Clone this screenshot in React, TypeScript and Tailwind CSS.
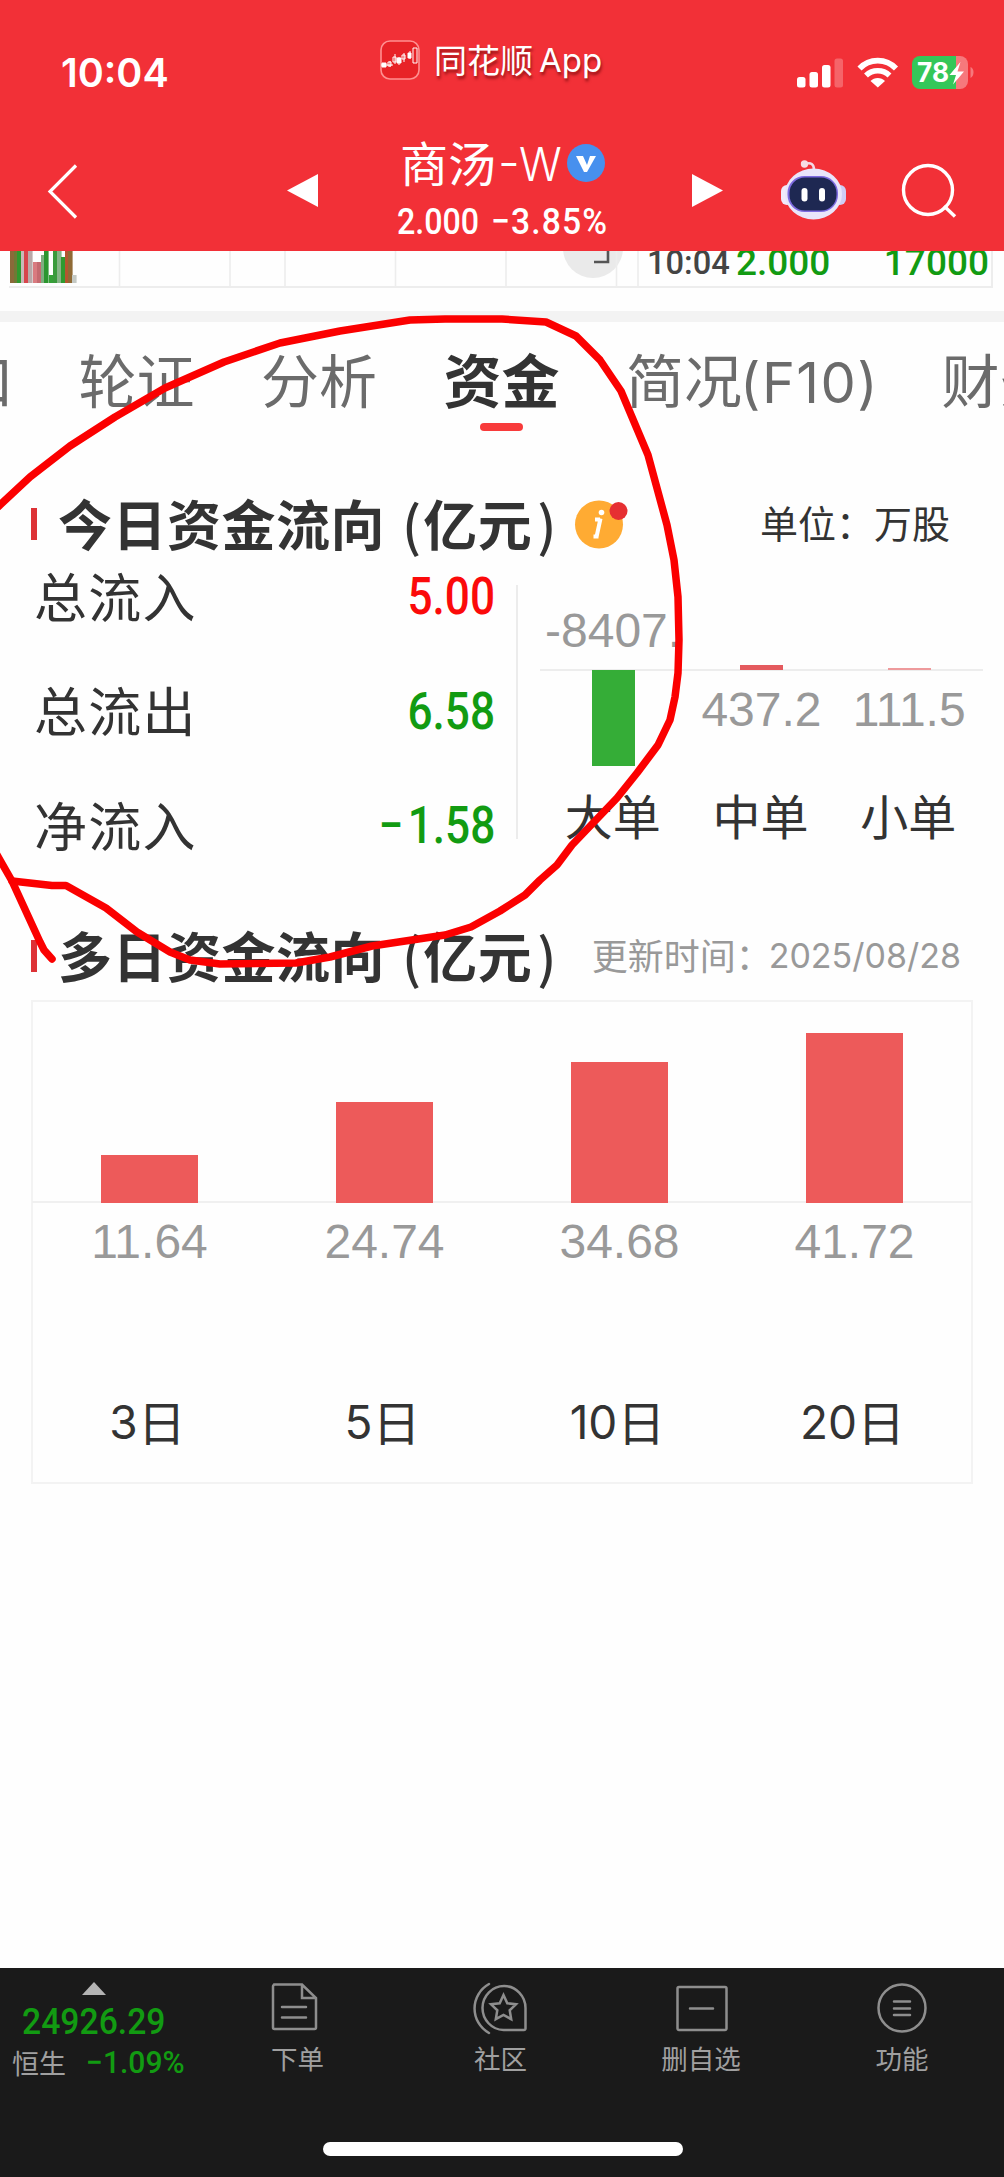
import type { ReactNode } from "react"
import clsx from "clsx"

const cjk = "font-['Noto_Sans_CJK_SC',sans-serif]"
const din = "font-['Roboto','Noto_Sans_CJK_SC',sans-serif]"
const arial = "font-['Liberation_Sans',sans-serif]"
const inter = "font-['Inter','Noto_Sans_CJK_SC',sans-serif]"

const tabs = ["盘口", "轮证", "分析", "资金", "简况(F10)", "财务"]

const flows = [
  { label: "总流入", sign: "", value: "5.00", up: true },
  { label: "总流出", sign: "", value: "6.58", up: false },
  { label: "净流入", sign: "−", value: "1.58", up: false },
]

const days = [
  { count: "3", value: "11.64", height: 48 },
  { count: "5", value: "24.74", height: 101 },
  { count: "10", value: "34.68", height: 141 },
  { count: "20", value: "41.72", height: 170 },
]

// x offset, color, top offset
const volumeBars = [
  [0, "#8a6a3a", 0], [4, "#6f7a35", 0], [7, "#2f9a2f", 0], [11, "#c9b9b9", 0], [14, "#d8454c", 0], [18, "#b9a9a9", 0],
  [23, "#d97b80", 11], [27, "#c56a70", 11], [31, "#7fae7f", 4], [34, "#2c962f", 0], [39, "#35a137", 24],
  [43, "#3a9a3c", 0], [47, "#86b586", 0], [51, "#2f9a2f", 6], [55, "#b4562f", 0], [58, "#8f6a35", 0], [62, "#c4c9c4", 24],
] as const

function StatusIcons() {
  return (
    <svg className="h-[36px] w-[180px]" viewBox="796 54 180 36" fill="#fff">
      <rect x="797" y="77" width="8.5" height="10.5" rx="2.5" />
      <rect x="809.5" y="72" width="8.5" height="15.5" rx="2.5" />
      <rect x="822" y="65" width="8.5" height="22.5" rx="2.5" />
      <rect x="834.5" y="58.5" width="8.5" height="29" rx="2.5" opacity=".25" />
      <g fill="none" stroke="#fff" strokeWidth="5.6">
        <path d="M859.5 68.5a25 25 0 0 1 36.500 0" />
        <path d="M866 75.500a17 17 0 0 1 23.500 0" />
      </g>
      <path d="M870.500 81a10 10 0 0 1 14.500 0l-7.200 6.500z" />
      <path d="M920 56h32v33h-32a8 8 0 0 1-8-8V64a8 8 0 0 1 8-8z" fill="#34c759" />
      <path d="M955 56h5a8 8 0 0 1 8 8v17a8 8 0 0 1-8 8h-5z" opacity=".35" />
      <rect x="950" y="56" width="6" height="33" fill="#34c759" />
      <path d="M970.5 67c4 1.500 4 9 0 11z" opacity=".35" />
      <text x="917" y="82" fontFamily="Inter, sans-serif" fontWeight="700" fontSize="26.5" textLength="32" lengthAdjust="spacingAndGlyphs">
        78
      </text>
      <path d="M960.500 62 949.500 75h6.500l-3 9.500L964 71.500h-6.500z" />
    </svg>
  )
}

function Robot() {
  return (
    <svg className="h-[62px] w-[68px]" viewBox="780 159 68 62">
      <path d="M806 164c6-2 9 0 9 6" fill="none" stroke="#f3d9e6" strokeWidth="2.6" />
      <circle cx="805.5" cy="164" r="3.7" fill="#f7dce4" />
      <rect x="782" y="185" width="12" height="20" rx="6" fill="#f1e9fb" />
      <rect x="835" y="185" width="12" height="20" rx="6" fill="#cfcdf5" />
      <ellipse cx="814.5" cy="194" rx="28.5" ry="25.5" fill="#e9e5fa" />
      <rect x="788.5" y="176" width="50.5" height="36" rx="17" fill="#7d6ae0" />
      <rect x="790.5" y="177.5" width="47" height="33" rx="15.5" fill="#1e2852" />
      <rect x="802.5" y="188" width="6" height="13.5" rx="3" fill="#fff" />
      <rect x="820" y="188" width="6" height="13.5" rx="3" fill="#fff" />
    </svg>
  )
}

function Header() {
  return (
    <header className="relative z-10 h-[251px] shrink-0 bg-[#f23037] text-white">
      <div className="flex h-[110px] pr-[28px] pl-[61px]">
        <div className={clsx(inter, "w-[319px] pt-[45px] text-[39.5px] leading-[56px] font-semibold")}>10:04</div>
        <div className="box-content flex h-[40px] w-[416px] items-center pt-[40px]">
          <svg className="size-[40px]" viewBox="0 0 40 40" fill="none" stroke="#fff">
            <rect x="1" y="1" width="38" height="38" rx="9" fill="#e82227" stroke="#ff8f90" strokeWidth="1.6" />
            <path d="M1 25h12M10 27v-6M15 14v10M19 17v8M24 13v9M30 11v8" strokeWidth="1" />
            <path d="M2 23h4v4H2zM17 18h4v5h-4zM28 13h3v5h-3z" fill="#fff" strokeWidth="1" />
            <path d="M8 22h3v4H8zM13 17h3v5h-3zM22 15h3v4h-3zM33 8h4v15h-4z" strokeWidth="1" />
          </svg>
          <span className={clsx(cjk, "-mt-[2px] ml-[14px] text-[33px] leading-none [text-shadow:1px_3px_3px_rgba(90,0,0,0.6)]")}>
            同花顺
          </span>
          <span className={clsx(inter, "ml-[6px] text-[33px] leading-none [text-shadow:1px_3px_3px_rgba(90,0,0,0.6)]")}>App</span>
        </div>
        <div className="pt-[54px]">
          <StatusIcons />
        </div>
      </div>
      <div className="flex">
        <svg className="mt-[51px] ml-[46px] h-[60px] w-[34px]" viewBox="46 161 34 60" fill="none" stroke="#fff" strokeWidth="3.2">
          <path d="M76 165.500 50 191.500l26 26" />
        </svg>
        <svg className="mt-[62px] ml-[207px] h-[36px] w-[32px]" viewBox="0 0 32 36" fill="#fff">
          <path d="M31 2v33L0 18.500z" />
        </svg>
        <div className="ml-[78px] w-[215px]">
          <div className="mt-[22px] flex h-[60px] items-center pl-[3px]">
            <span className={clsx(cjk, "-mt-[2px] text-[48px] leading-none")}>商汤</span>
            <span className={clsx(inter, "ml-[2px] text-[48px] leading-none font-light")}>-</span>
            <span className={clsx(inter, "mt-[3px] -ml-px origin-left scale-x-[0.94] text-[47px] leading-none font-light")}>W</span>
            <svg className="absolute top-[143px] left-[566px] size-[40px]" viewBox="0 0 40 40">
              <circle cx="20" cy="20" r="19" fill="#4790ee" />
              <path d="M10 13h7l4 9 3-9h6l-9 16h-3z" fill="#fff" />
            </svg>
          </div>
          <div className={clsx(din, "mt-[4px] flex h-[50px] items-center text-[37px] leading-none font-medium whitespace-nowrap")}>
            <span className="w-[95px] origin-left scale-x-[0.87]">2.000</span>
            <span className="origin-left scale-x-[0.91] tracking-[1.2px]">−3.85%</span>
          </div>
        </div>
        <svg className="mt-[62px] ml-[79px] h-[36px] w-[32px]" viewBox="0 0 32 36" fill="#fff">
          <path d="M1 2v33l31-16.500z" />
        </svg>
        <div className="mt-[49px] ml-[56px]">
          <Robot />
        </div>
        <svg className="mt-[50px] ml-[53px] size-[60px]" viewBox="900 160 60 60" fill="none" stroke="#fff" strokeWidth="3.4">
          <circle cx="928" cy="190" r="24.5" />
          <path d="m944 206 11 10.500" />
        </svg>
      </div>
    </header>
  )
}

function QuoteStrip() {
  return (
    <div className="h-[60px] shrink-0">
      <div className="ml-[9px] flex h-[37px] w-[984px] border-r-2 border-b-2 border-[#ededed]">
        <svg className="h-[35px] w-[630px] shrink-0" viewBox="9 251 630 35">
          {volumeBars.map(([x, color, top]) => (
            <rect key={x} x={10 + x} y={251 + top} width="4.6" height={32 - top} fill={color} />
          ))}
          <circle cx="593" cy="248" r="30" fill="#eaeaea" />
          <path d="M119.500 251v36M230 251v36M285 251v36M395.500 251v36M506 251v36M616.500 251v36M638 251v36" stroke="#ededed" strokeWidth="1.6" />
          <path d="M608 251v11h-14" fill="none" stroke="#555" strokeWidth="2.6" />
        </svg>
        <div className={clsx(din, "-mt-px flex grow items-start text-[37px] leading-[26px] font-medium")}>
          <span className="-mt-px ml-[8px] w-[89px] origin-left scale-x-[0.96] text-[34px] whitespace-nowrap text-[#444]">10:04</span>
          <span className="origin-left text-[#129b12]">2.000</span>
          <span className="mr-[2px] ml-auto text-[#129b12]">17000</span>
        </div>
      </div>
    </div>
  )
}

function Tabs() {
  return (
    <nav className={clsx(cjk, "-ml-[102px] flex h-[118px] shrink-0 gap-[66.5px] overflow-hidden text-[58px] leading-none whitespace-nowrap text-[#6b6b6b]")}>
      {tabs.map((tab) => (
        <div
          key={tab}
          className={clsx("flex shrink-0 flex-col items-center pt-[27px]", tab === "资金" && "font-bold text-[#333]", tab === "轮证" && "-ml-[2px]", tab === "财务" && "-ml-[4px]")}
        >
          {tab === "简况(F10)" ? (
            <span>
              简况<span className={clsx(inter, "-ml-[2px] text-[56px] leading-none tracking-[1.4px]")}>(F10)</span>
            </span>
          ) : (
            <span>{tab}</span>
          )}
          {tab === "资金" && <span className="mt-[16px] h-[8px] w-[43px] rounded-full bg-[#f83b3b]" />}
        </div>
      ))}
    </nav>
  )
}

function SectionTitle({ children }: { children: ReactNode }) {
  return (
    <h2 className={clsx(cjk, "flex items-center text-[54px] leading-none font-bold whitespace-nowrap text-[#333]")}>
      <span className="mr-[21px] h-[32px] w-[6px] bg-[#dd3236]" />
      <span className="-mt-[3px] tracking-[0.5px]">{children}</span>
      <span className="-mt-[3px] ml-[17px] font-medium">(</span>
      <span className="-mt-[3px] ml-[2px] tracking-[0.5px]">亿元</span>
      <span className="-mt-[3px] ml-[5px] font-medium">)</span>
    </h2>
  )
}

function TodayFlow() {
  return (
    <section className="shrink-0">
      <div className="flex h-[60px] items-center pl-[31px]">
        <SectionTitle>今日资金流向</SectionTitle>
        <svg className="ml-[17px] size-[56px]" viewBox="573 496 56 56">
          <circle cx="599" cy="524.5" r="24" fill="#ffab33" />
          <path d="M600.500 518.500 596.500 537M595 519.500h5M593.500 536.500h5" stroke="#fff" strokeWidth="4" />
          <circle cx="601.5" cy="512.5" r="2.8" fill="#fff" />
          <circle cx="618.5" cy="511" r="9" fill="#e62f32" />
        </svg>
        <span className={clsx(cjk, "-mt-[4px] mr-[54px] ml-auto text-[38px] leading-none text-[#333]")}>单位：万股</span>
      </div>
      <div className="flex h-[300px] pl-[34px]">
        <div className="w-[461px] pt-[13px]">
          {flows.map((flow) => (
            <div key={flow.label} className="mb-[54.5px] flex h-[60px] items-center justify-between">
              <span className={clsx(cjk, "-mt-[4px] text-[53px] leading-none tracking-[1.2px] text-[#333]")}>{flow.label}</span>
              <span
                className={clsx(
                  din,
                  "origin-right scale-x-[0.85] text-[52px] leading-none font-medium",
                  flow.up ? "text-[#fb0a0a]" : "text-[#129b12]",
                )}
              >
                {flow.sign && <span className="mr-[5px]">{flow.sign}</span>}
                {flow.value}
              </span>
            </div>
          ))}
        </div>
        <div className="mt-[31px] ml-[21px] h-[254px] w-[2px] bg-[#ececec]" />
        <div className="ml-[22px] grid w-[443px] grid-cols-3 self-start">
          <div className="flex flex-col items-center">
            <div className="flex h-[117px] w-full flex-col justify-end border-b-2 border-[#ededed]">
              <span className={clsx(arial, "mb-[16px] pl-[5px] text-[48px] leading-[45px] text-[#999]")}>-8407.</span>
            </div>
            <div className="-mt-px h-[96px] w-[43px] bg-[#35ad37]" />
          </div>
          <div className="flex flex-col items-center">
            <div className="flex h-[117px] w-full flex-col items-center justify-end border-b-2 border-[#ededed]">
              <div className="-mb-px h-[5px] w-[43px] bg-[#e45a5e]" />
            </div>
            <span className={clsx(arial, "mt-[14px] text-[48px] leading-[50px] text-[#999]")}>437.2</span>
          </div>
          <div className="flex flex-col items-center">
            <div className="flex h-[117px] w-full flex-col items-center justify-end border-b-2 border-[#ededed]">
              <div className="-mb-px h-[2px] w-[43px] bg-[#ee9a9c]" />
            </div>
            <span className={clsx(arial, "mt-[14px] text-[48px] leading-[50px] text-[#999]")}>111.5</span>
          </div>
          {["大单", "中单", "小单"].map((label) => (
            <span key={label} className={clsx(cjk, "-ml-[2px] pt-[24px] text-center text-[48px] leading-none text-[#333]")}>
              {label}
            </span>
          ))}
        </div>
      </div>
    </section>
  )
}

function MultiDayFlow() {
  return (
    <section className="shrink-0">
      <div className="mt-[72px] flex h-[60px] items-center pl-[31px]">
        <SectionTitle>多日资金流向</SectionTitle>
        <span className={clsx(cjk, "-mt-[4px] ml-auto text-[36px] leading-none whitespace-nowrap text-[#999]")}>更新时间：</span>
        <span className={clsx(inter, "mr-[43px] -ml-[3px] text-[34px] leading-none text-[#999]")}>2025/08/28</span>
      </div>
      <div className="mt-[14px] ml-[31px] grid h-[484px] w-[942px] grid-cols-4 px-px shadow-[inset_0_0_0_2px_#f3f3f3]">
        {days.map((day) => (
          <div key={day.count} className="flex flex-col items-center">
            <div className="flex h-[203px] w-full items-end justify-center border-b-2 border-[#f0f0f0]">
              <div className="-mb-[2px] w-[97px] bg-[#ed5a5a]" style={{ height: day.height }} />
            </div>
            <span className={clsx(arial, "mt-[14px] text-[48px] leading-[50px] text-[#999]")}>{day.value}</span>
            <span className="mt-[129px] -ml-[4px] flex items-center text-[48px] leading-none text-[#333]">
              <span className={clsx(inter, "mt-[3px] text-[46px]")}>{day.count}</span>
              <span className={clsx(cjk, "-mt-px")}>日</span>
            </span>
          </div>
        ))}
      </div>
    </section>
  )
}

const actions = [
  {
    label: "下单",
    icon: (
      <path d="M3 4.500h28l14 13.500v29.500a1.500 1.500 0 0 1-1.500 1.500h-40A1.500 1.500 0 0 1 2 47.500v-41A2 2 0 0 1 4 4.500M31 4.500V18h14M11 27h24M11 37.500h24" />
    ),
  },
  {
    label: "社区",
    icon: (
      <>
        <path d="M29.500 50H50a1.500 1.500 0 0 0 1.500-1.500V28a21.500 22 0 1 0-22 22z" />
        <path d="M15 4a28 28 0 0 0 0 49" />
        <path d="m29.500 15 3.800 8.300 8.700 1-6.300 6 1.500 8.900-7.700-4.200-7.700 4.200 1.500-8.900-6.300-6 8.700-1z" />
      </>
    ),
  },
  {
    label: "删自选",
    icon: <path d="M5 7h46a1.500 1.500 0 0 1 1.500 1.500v40A1.500 1.500 0 0 1 51 50H5a1.500 1.500 0 0 1-1.500-1.500v-40A1.500 1.500 0 0 1 5 7zM16 28.500h23" />,
  },
  {
    label: "功能",
    icon: (
      <>
        <circle cx="27" cy="28" r="23.5" />
        <path d="M19 21.500h16M19 28.500h16M19 35h16" />
      </>
    ),
  },
]

function BottomBar() {
  return (
    <footer className="relative h-[209px] bg-[#1a1a1a]">
      <div className="flex">
        <div className={clsx(din, "flex w-[187px] flex-col items-center font-medium text-[#129b12]")}>
          <svg className="mt-[14px] h-[13px] w-[24px]" viewBox="0 0 24 13">
            <path d="M12 0 24 13H0z" fill="#b4b4b4" />
          </svg>
          <span className="mt-[9px] scale-x-[0.91] text-[37px] leading-[36px]">24926.29</span>
          <div className="mt-[8px] flex w-full items-center pl-[12px] leading-[30px] whitespace-nowrap">
            <span className={clsx(cjk, "text-[27px] font-normal text-[#a0a0a0]")}>恒生</span>
            <span className="-mt-px ml-[20px] origin-left scale-x-[0.97] text-[31px]">−1.09%</span>
          </div>
        </div>
        <div className="ml-[9px] grid grid-cols-[203px_203px_198px_204px]">
          {actions.map((action) => (
            <div key={action.label} className="flex flex-col items-center">
              <svg className="mt-[12px] h-[56px] w-[54px] overflow-visible" viewBox="0 0 54 56" fill="none" stroke="#8e8e8e" strokeWidth="2.5" strokeLinecap="round">
                {action.icon}
              </svg>
              <span className={clsx(cjk, "mt-[9px] text-[26.5px] leading-[26px] text-[#a0a0a0]")}>{action.label}</span>
            </div>
          ))}
        </div>
      </div>
      <div className="absolute bottom-[21px] left-[323px] h-[14px] w-[360px] rounded-full bg-white" />
    </footer>
  )
}

// Freehand marker circle over the fund flow card
function MarkerCircle() {
  return (
    <svg
      className="pointer-events-none absolute top-0 left-0 h-[1000px] w-[1004px]"
      viewBox="0 0 1004 1000"
      fill="none"
      stroke="#fb0000"
      strokeWidth="7.5"
      strokeLinecap="round"
      strokeLinejoin="round"
    >
      <path d="M-6 511 0 505 30 477 70 446 115 417 165 388 224 362 280 343 340 331 410 320 445 319H502L546 322 576 336 600 360 621 391 648 455 667 525 674 560 678 597 679 640 678 673 675 697 670 720 658 745 637 773 617 798 572 845 557 865 540 880 525 895 500 911 471 927 445 935 372 946 330 957 296 963 220 964 190 960 170 952 137 932 106 908 66 885.500H52L12 881" />
      <path d="M-8 846 0 860 12 881 40 942 44 950 52 959" />
    </svg>
  )
}

export default function App() {
  return (
    <div className="relative flex h-[2177px] w-[1004px] flex-col overflow-hidden bg-[#fefefe]">
      <Header />
      <QuoteStrip />
      <div className="h-[11px] shrink-0 bg-[#f3f3f3]" />
      <Tabs />
      <div className="h-[54px] shrink-0" />
      <TodayFlow />
      <MultiDayFlow />
      <div className="mt-auto">
        <BottomBar />
      </div>
      <MarkerCircle />
    </div>
  )
}
